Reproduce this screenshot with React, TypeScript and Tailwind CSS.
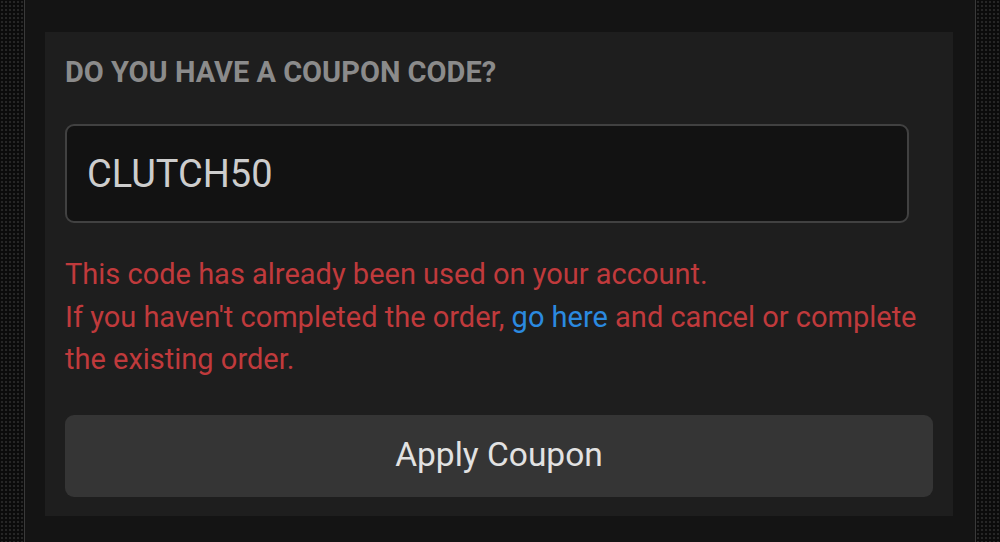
export default function App() {
  return (
    <div
      className="flex h-[542px] w-[1000px] overflow-hidden bg-[#131313]"
      style={{ fontFamily: "Roboto, 'Noto Sans', sans-serif" }}
    >
      <div className="w-[24px] shrink-0 bg-[#0b0b0b] bg-[radial-gradient(circle,#262626_1px,transparent_1.6px)] bg-[length:4px_4px]" />
      <div className="w-px shrink-0 bg-[#3a3a3a]" />

      <main className="flex-1 bg-[#141414] pl-[20px] pr-[22px] pt-[32px]">
        <section className="bg-[#1e1e1e] px-[20px] pb-[19px] pt-[26px]">
          <h2 className="text-[29px] font-bold leading-[29px] text-[#8b8b8b]">
            DO YOU HAVE A COUPON CODE?
          </h2>

          <div className="mt-[37px] flex h-[99px] w-[844px] items-center rounded-[9px] border-2 border-[#414141] bg-[#121212] pl-[20px]">
            <span className="text-[38px] leading-none text-[#cdcdcd]">CLUTCH50</span>
          </div>

          <p className="mt-[30px] text-[29px] leading-[42.5px] text-[#c03a3c]">
            This code has already been used on your account.
            <br />
            If you haven't completed the order,{" "}
            <a className="text-[#2b8ae0]">go here</a> and cancel or complete
            <br />
            the existing order.
          </p>

          <button className="mt-[34px] flex h-[82px] w-full items-center justify-center rounded-[9px] bg-[#353535] text-[33.5px] text-[#e2e2e2]">
            Apply Coupon
          </button>
        </section>
      </main>

      <div className="w-px shrink-0 bg-[#3a3a3a]" />
      <div className="w-[24px] shrink-0 bg-[#0b0b0b] bg-[radial-gradient(circle,#262626_1px,transparent_1.6px)] bg-[length:4px_4px]" />
    </div>
  );
}
